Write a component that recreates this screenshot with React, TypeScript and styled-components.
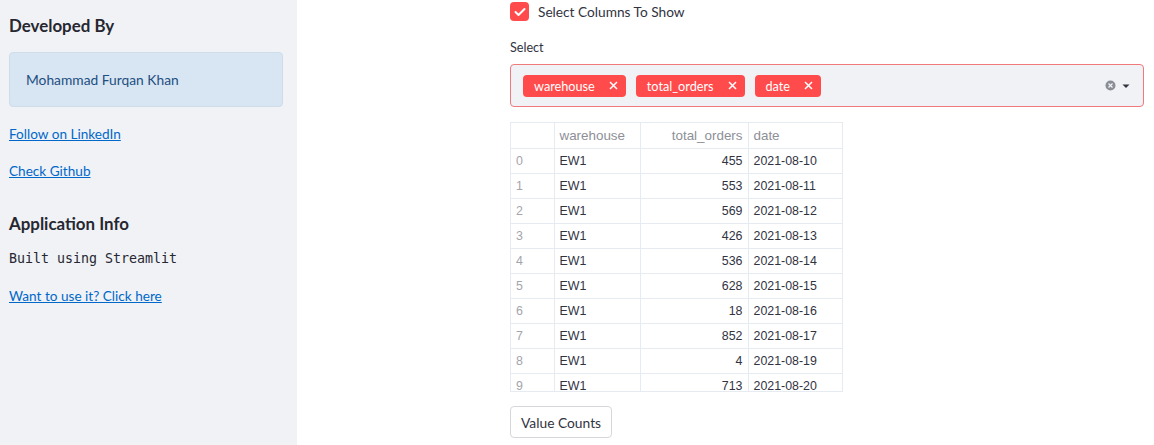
import React, { FC } from "react";
import styled, { createGlobalStyle } from "styled-components";

const GlobalStyle = createGlobalStyle`
  html, body {
    margin: 0;
    padding: 0;
    background: #ffffff;
    font-family: "Source Sans Pro", Lato, "Noto Sans", sans-serif;
    color: #31333f;
  }
`;

const Page = styled.div`
  display: flex;
  width: 1154px;
  height: 445px;
  overflow: hidden;
`;

const Sidebar = styled.aside`
  width: 297px;
  flex-shrink: 0;
  background: #f0f2f6;
  padding: 14px 14px 0 9px;
  box-sizing: border-box;
  display: flex;
  flex-direction: column;
`;

const SideTitle = styled.h2<{ $top?: number }>`
  margin: ${(p) => p.$top ?? 0}px 0 0;
  font-size: 16.9px;
  font-weight: 700;
  line-height: 24px;
  color: #262730;
`;

const InfoBox = styled.div`
  margin-top: 14px;
  height: 53px;
  display: flex;
  align-items: center;
  padding: 0 16px;
  background: #d8e5f3;
  border: 1px solid #cfdcea;
  border-radius: 4px;
  font-size: 13.8px;
  color: #1d4f80;
`;

const SideLink = styled.a<{ $top: number }>`
  margin-top: ${(p) => p.$top}px;
  font-size: 13.6px;
  line-height: 18px;
  color: #0068c9;
  text-decoration: underline;
  align-self: flex-start;
`;

const Mono = styled.div`
  margin-top: 14px;
  font-family: "DejaVu Sans Mono", "Liberation Mono", monospace;
  font-size: 13.3px;
  line-height: 18px;
  color: #262730;
`;

const Main = styled.main`
  flex: 1;
  padding: 0 10px 0 213px;
  display: flex;
  flex-direction: column;
`;

const CheckRow = styled.label`
  display: flex;
  align-items: center;
  gap: 9px;
  margin-top: 2px;
  font-size: 13.7px;
  line-height: 19px;
`;

const CheckBox = styled.span`
  width: 19px;
  height: 19px;
  border-radius: 4px;
  background: #ff4b4b;
  display: flex;
  align-items: center;
  justify-content: center;
`;

const FieldLabel = styled.div`
  margin-top: 19px;
  font-size: 12.6px;
  line-height: 16px;
`;

const SelectBox = styled.div`
  margin-top: 8px;
  height: 43px;
  box-sizing: border-box;
  border: 1px solid #f0797b;
  border-radius: 4px;
  background: #f0f2f6;
  display: flex;
  align-items: center;
  padding: 0 12px;
  gap: 10px;
`;

const Tag = styled.span`
  height: 22px;
  display: flex;
  align-items: center;
  gap: 14px;
  padding: 0 8px 0 11px;
  background: #ff4b4b;
  border-radius: 4px;
  color: #ffffff;
  font-size: 12.7px;
`;

const Controls = styled.div`
  margin-left: auto;
  display: flex;
  align-items: center;
  gap: 5px;
`;

const TableWrap = styled.div`
  margin-top: 15px;
  width: 333px;
  height: 270px;
  overflow: hidden;
  border: 1px solid #e6eaf1;
  box-sizing: border-box;
`;

const Table = styled.table`
  border-collapse: collapse;
  table-layout: fixed;
  width: 332px;
  font-family: "Liberation Sans", Arial, sans-serif;
  font-size: 12.4px;
  color: #31333f;
`;

const Head = styled.th<{ $w: number; $right?: boolean }>`
  width: ${(p) => p.$w}px;
  height: 25px;
  box-sizing: border-box;
  padding: 0 5px;
  font-weight: 400;
  font-size: 13.4px;
  color: #8d8f97;
  text-align: ${(p) => (p.$right ? "right" : "left")};
  border-right: 1px solid #e6eaf1;
  border-bottom: 1px solid #e6eaf1;
`;

const Cell = styled.td<{ $right?: boolean; $index?: boolean }>`
  height: 25px;
  box-sizing: border-box;
  padding: 0 5px;
  text-align: ${(p) => (p.$right ? "right" : "left")};
  color: ${(p) => (p.$index ? "#a3a5ab" : "#31333f")};
  border-right: 1px solid #e6eaf1;
  border-bottom: 1px solid #e6eaf1;
  white-space: nowrap;
`;

const Button = styled.button`
  margin-top: 14px;
  align-self: flex-start;
  height: 32px;
  padding: 0 10px;
  background: #ffffff;
  border: 1px solid #d6d7da;
  border-radius: 4px;
  font-family: inherit;
  font-size: 13.8px;
  color: #31333f;
`;

const rows: [string, number, string][] = [
  ["EW1", 455, "2021-08-10"],
  ["EW1", 553, "2021-08-11"],
  ["EW1", 569, "2021-08-12"],
  ["EW1", 426, "2021-08-13"],
  ["EW1", 536, "2021-08-14"],
  ["EW1", 628, "2021-08-15"],
  ["EW1", 18, "2021-08-16"],
  ["EW1", 852, "2021-08-17"],
  ["EW1", 4, "2021-08-19"],
  ["EW1", 713, "2021-08-20"],
];

const Cross: FC = () => (
  <svg width="9" height="9" viewBox="0 0 9 9">
    <path d="M1 1L8 8M8 1L1 8" stroke="#fff" strokeWidth="1.5" />
  </svg>
);

const App: FC = () => {
  return (
    <Page>
      <GlobalStyle />
      <Sidebar>
        <SideTitle>Developed By</SideTitle>
        <InfoBox>Mohammad Furqan Khan</InfoBox>
        <SideLink $top={18} href="#">Follow on LinkedIn</SideLink>
        <SideLink $top={19} href="#">Check Github</SideLink>
        <SideTitle $top={32}>Application Info</SideTitle>
        <Mono>Built using Streamlit</Mono>
        <SideLink $top={19} href="#">Want to use it? Click here</SideLink>
      </Sidebar>
      <Main>
        <CheckRow>
          <CheckBox>
            <svg width="12" height="10" viewBox="0 0 12 10">
              <path d="M1.5 5L4.5 8L10.5 2" stroke="#fff" strokeWidth="2" fill="none" strokeLinecap="round" strokeLinejoin="round" />
            </svg>
          </CheckBox>
          Select Columns To Show
        </CheckRow>
        <FieldLabel>Select</FieldLabel>
        <SelectBox>
          {["warehouse", "total_orders", "date"].map((t) => (
            <Tag key={t}>
              {t}
              <Cross />
            </Tag>
          ))}
          <Controls>
            <svg width="11" height="11" viewBox="0 0 11 11">
              <circle cx="5.5" cy="5.5" r="5" fill="#8a8d94" />
              <path d="M3.5 3.5L7.5 7.5M7.5 3.5L3.5 7.5" stroke="#f0f2f6" strokeWidth="1.3" />
            </svg>
            <svg width="10" height="10" viewBox="0 0 10 10">
              <path d="M1.5 3.5L8.5 3.5L5 7Z" fill="#31333f" />
            </svg>
          </Controls>
        </SelectBox>
        <TableWrap>
          <Table>
            <thead>
              <tr>
                <Head $w={43}></Head>
                <Head $w={86}>warehouse</Head>
                <Head $w={108} $right>total_orders</Head>
                <Head $w={95}>date</Head>
              </tr>
            </thead>
            <tbody>
              {rows.map(([w, n, d], i) => (
                <tr key={i}>
                  <Cell $index>{i}</Cell>
                  <Cell>{w}</Cell>
                  <Cell $right>{n}</Cell>
                  <Cell>{d}</Cell>
                </tr>
              ))}
            </tbody>
          </Table>
        </TableWrap>
        <Button>Value Counts</Button>
      </Main>
    </Page>
  );
};

export default App;
